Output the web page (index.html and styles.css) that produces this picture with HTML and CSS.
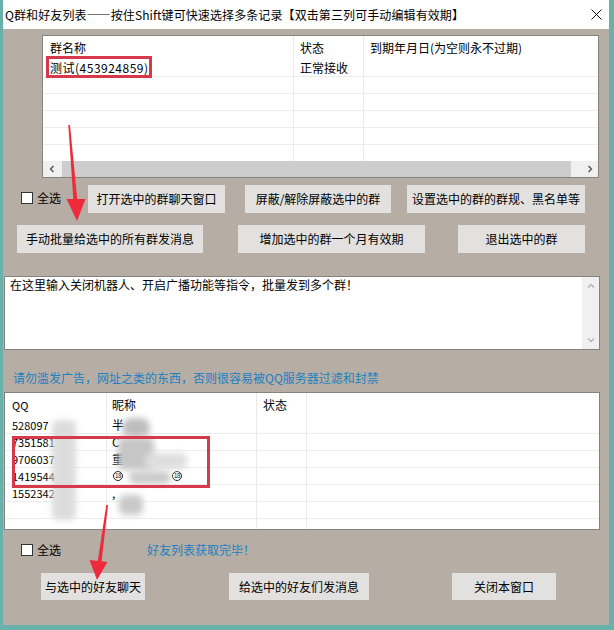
FILE: index.html
```html
<!DOCTYPE html>
<html lang="zh-CN">
<head>
<meta charset="utf-8">
<title>Q群和好友列表</title>
<link rel="stylesheet" href="styles.css">
</head>
<body>
<div class="window">
  <div class="titlebar">
    <span class="title">Q群和好友列表——按住Shift键可快速选择多条记录【双击第三列可手动编辑有效期】</span>
    <svg class="close" viewBox="0 0 11 11" width="11" height="11"><path d="M0.5 0.5 L10.5 10.5 M10.5 0.5 L0.5 10.5" stroke="#111" stroke-width="1" fill="none"/></svg>
  </div>
  <div class="client">
    <div class="listview grouplist">
      <div class="lv-head">
        <div class="cell g1">群名称</div>
        <div class="cell g2">状态</div>
        <div class="cell g3">到期年月日(为空则永不过期)</div>
      </div>
      <div class="lv-body">
        <div class="lv-row"><div class="cell g1 first">测试(453924859)</div><div class="cell g2">正常接收</div><div class="cell g3"></div></div>
        <div class="lv-row"><div class="cell g1"></div><div class="cell g2"></div><div class="cell g3"></div></div>
        <div class="lv-row"><div class="cell g1"></div><div class="cell g2"></div><div class="cell g3"></div></div>
        <div class="lv-row"><div class="cell g1"></div><div class="cell g2"></div><div class="cell g3"></div></div>
        <div class="lv-row"><div class="cell g1"></div><div class="cell g2"></div><div class="cell g3"></div></div>
        <div class="lv-row"><div class="cell g1"></div><div class="cell g2"></div><div class="cell g3"></div></div>
      </div>
      <div class="hscroll">
        <div class="sb-btn"><svg viewBox="0 0 8 8" width="8" height="8"><path d="M5.5 1 L2.5 4 L5.5 7" stroke="#555" stroke-width="1.4" fill="none"/></svg></div>
        <div class="sb-track"><div class="sb-thumb"></div></div>
        <div class="sb-btn"><svg viewBox="0 0 8 8" width="8" height="8"><path d="M2.5 1 L5.5 4 L2.5 7" stroke="#555" stroke-width="1.4" fill="none"/></svg></div>
      </div>
      <div class="mark mark-group"></div>
    </div>

    <div class="btn-row row1">
      <label class="check"><span class="box"></span>全选</label>
      <button class="btn b1">打开选中的群聊天窗口</button>
      <button class="btn b2">屏蔽/解除屏蔽选中的群</button>
      <button class="btn b3">设置选中的群的群规、黑名单等</button>
    </div>
    <div class="btn-row row2">
      <button class="btn b4">手动批量给选中的所有群发消息</button>
      <button class="btn b5">增加选中的群一个月有效期</button>
      <button class="btn b6">退出选中的群</button>
    </div>

    <div class="memo">
      <div class="memo-text">在这里输入关闭机器人、开启广播功能等指令，批量发到多个群！</div>
      <div class="vscroll">
        <svg viewBox="0 0 8 8" width="8" height="8"><path d="M1 5.5 L4 2.5 L7 5.5" stroke="#b0b0b0" stroke-width="1.3" fill="none"/></svg>
        <svg viewBox="0 0 8 8" width="8" height="8"><path d="M1 2.5 L4 5.5 L7 2.5" stroke="#b0b0b0" stroke-width="1.3" fill="none"/></svg>
      </div>
    </div>

    <div class="notice">请勿滥发广告，网址之类的东西，否则很容易被QQ服务器过滤和封禁</div>

    <div class="listview friendlist">
      <div class="lv-head">
        <div class="cell f1">QQ</div>
        <div class="cell f2">昵称</div>
        <div class="cell f3">状态</div>
        <div class="cell f4"></div>
      </div>
      <div class="lv-body">
        <div class="lv-row"><div class="cell f1">528097</div><div class="cell f2">半</div><div class="cell f3"></div><div class="cell f4"></div></div>
        <div class="lv-row"><div class="cell f1">7351581</div><div class="cell f2">C</div><div class="cell f3"></div><div class="cell f4"></div></div>
        <div class="lv-row"><div class="cell f1">9706037</div><div class="cell f2">重</div><div class="cell f3"></div><div class="cell f4"></div></div>
        <div class="lv-row"><div class="cell f1">1419544</div><div class="cell f2"><span class="sym">18</span><span class="sym sym2">18</span></div><div class="cell f3"></div><div class="cell f4"></div></div>
        <div class="lv-row"><div class="cell f1">1552342</div><div class="cell f2">,</div><div class="cell f3"></div><div class="cell f4"></div></div>
        <div class="lv-row"><div class="cell f1"></div><div class="cell f2"></div><div class="cell f3"></div><div class="cell f4"></div></div>
        <div class="lv-row"><div class="cell f1"></div><div class="cell f2"></div><div class="cell f3"></div><div class="cell f4"></div></div>
      </div>
      <div class="blur blur-a"></div>
      <div class="blur blur-b"></div>
      <div class="blur blur-c"></div>
      <div class="blur blur-c2"></div>
      <div class="blur blur-d"></div>
      <div class="blur blur-e"></div>
      <div class="mark mark-friend"></div>
    </div>

    <div class="status-row">
      <label class="check"><span class="box"></span>全选</label>
      <span class="status">好友列表获取完毕！</span>
    </div>
    <div class="btn-row row3">
      <button class="btn b7">与选中的好友聊天</button>
      <button class="btn b8">给选中的好友们发消息</button>
      <button class="btn b9">关闭本窗口</button>
    </div>
  </div>

  <svg class="arrows" viewBox="0 0 614 630" width="614" height="630">
    <polygon points="68.3,125 70,125 77.6,203 73.6,203" fill="#ee2b3b"/>
    <polygon points="66.5,199 85.5,199 77,221" fill="#ee2b3b"/>
    <polygon points="106.3,505 108,505 101.3,564 97.3,564" fill="#ee2b3b"/>
    <polygon points="89.5,560 107.5,562 97,580" fill="#ee2b3b"/>
  </svg>
</div>
</body>
</html>
```

FILE: styles.css
```css
* { box-sizing: border-box; }

html, body {
  margin: 0;
  padding: 0;
}

body {
  width: 614px;
  height: 630px;
  overflow: hidden;
  background: #69b2ab;
  font-family: "Noto Sans CJK SC", "Noto Sans", "Liberation Sans", sans-serif;
  font-size: 12px;
  color: #000;
}

.window {
  position: relative;
  width: 614px;
  height: 630px;
  display: flex;
  flex-direction: column;
  background: #b6aea4;
  border-left: 3px solid #69b2ab;
  border-right: 5px solid #69b2ab;
  border-bottom: 5px solid #69b2ab;
}

.titlebar {
  flex: none;
  height: 29px;
  background: #fff;
  display: flex;
  align-items: center;
  padding-left: 2px;
}

.title {
  flex: 1;
  line-height: 16px;
  white-space: nowrap;
  font-size: 12px;
  letter-spacing: 0.1px;
}

.close {
  flex: none;
  margin-right: 7px;
}

.client {
  flex: 1;
  display: flex;
  flex-direction: column;
}

/* list views */
.listview {
  position: relative;
  flex: none;
  display: flex;
  flex-direction: column;
  overflow: hidden;
  background: #fff;
  border: 1px solid #86827d;
}

.grouplist {
  margin: 6px 0 0 39px;
  width: 557px;
  height: 143px;
}

.friendlist {
  margin: 6px 9px 0 1px;
  height: 138px;
}

.lv-head {
  flex: none;
  display: flex;
  height: 24px;
}

.lv-body {
  flex: 1;
  overflow: hidden;
  display: flex;
  flex-direction: column;
}

.lv-row {
  flex: none;
  display: flex;
  height: 17px;
  border-bottom: 1px solid #ededed;
}

.cell {
  flex: none;
  display: flex;
  align-items: center;
  height: 100%;
  padding-left: 6px;
  white-space: nowrap;
  line-height: 16px;
  border-right: 1px solid #eaeaea;
}

.cell:last-child {
  flex: 1;
  border-right: none;
}

.g1 { width: 251px; padding-left: 7px; }
.g1.first { letter-spacing: 0.5px; }
.g2 { width: 70px; }
.f1 { width: 102px; padding-left: 7px; font-size: 11px; }
.f2 { width: 150px; padding-left: 5px; }
.f3 { width: 50px; }

.sym {
  display: inline-flex;
  align-items: center;
  justify-content: center;
  width: 10px;
  height: 10px;
  border: 1px solid #222;
  border-radius: 50%;
  font-size: 6px;
  line-height: 6px;
  letter-spacing: -0.3px;
  color: #000;
  margin-left: 1px;
}
.sym2 { margin-left: 49px; }

/* horizontal scrollbar */
.hscroll {
  flex: none;
  height: 16px;
  display: flex;
  background: #f0f0f0;
}

.sb-btn {
  width: 17px;
  display: flex;
  align-items: center;
  justify-content: center;
}

.sb-track {
  flex: 1;
  padding: 0 10px 0 2px;
}

.sb-thumb {
  height: 100%;
  background: #cdcdcd;
}

/* annotations */
.mark {
  position: absolute;
  border: 3px solid #d6394a;
}

.mark-group {
  left: 3px;
  top: 20px;
  width: 106px;
  height: 22px;
}

.mark-friend {
  left: 7px;
  top: 43px;
  width: 198px;
  height: 52px;
}

.blur {
  position: absolute;
  filter: blur(3px);
  border-radius: 6px;
}

.blur-a { left: 47px; top: 27px; width: 24px; height: 100px; background: #dcdcdc; }
.blur-b { left: 117px; top: 25px; width: 28px; height: 19px; background: #bdbdbd; border-radius: 10px; }
.blur-c { left: 113px; top: 44px; width: 36px; height: 33px; background: #c6c6c6; }
.blur-c2 { left: 140px; top: 60px; width: 42px; height: 16px; background: #dedede; }
.blur-d { left: 124px; top: 78px; width: 42px; height: 13px; background: #cbcbcb; }
.blur-e { left: 114px; top: 102px; width: 24px; height: 20px; background: #c9c9c9; }

.arrows {
  position: absolute;
  left: -3px;
  top: 0;
  pointer-events: none;
}

/* checkbox */
.check {
  display: flex;
  align-items: center;
  gap: 4px;
  line-height: 16px;
  flex: none;
}

.box {
  width: 12px;
  height: 12px;
  background: #fff;
  border: 1px solid #333;
}

/* buttons */
.btn-row {
  flex: none;
  display: flex;
  align-items: center;
}

.btn {
  flex: none;
  height: 28px;
  padding: 0;
  border: none;
  background: #e2e1df;
  color: #000;
  font-family: inherit;
  font-size: 12px;
  line-height: 16px;
  display: flex;
  align-items: center;
  justify-content: center;
}

.row1 { margin-top: 7px; padding-left: 18px; }
.row1 .check { margin-bottom: 3px; }
.b1 { width: 137px; margin-left: 27px; }
.b2 { width: 146px; margin-left: 20px; }
.b3 { width: 178px; margin-left: 16px; }

.row2 { margin-top: 12px; padding-left: 14px; }
.b4 { width: 186px; }
.b5 { width: 187px; margin-left: 35px; }
.b6 { width: 127px; margin-left: 33px; }

.row3 { margin-top: 15px; padding-left: 38px; }
.row3 .btn { height: 27px; }
.b7 { width: 104px; }
.b8 { width: 140px; margin-left: 84px; }
.b9 { width: 104px; margin-left: 83px; }

/* memo */
.memo {
  flex: none;
  margin: 23px 9px 0 1px;
  height: 74px;
  display: flex;
  background: #fff;
  border: 1px solid #86827d;
}

.memo-text {
  flex: 1;
  padding: 0 5px;
  line-height: 16px;
}

.vscroll {
  flex: none;
  width: 17px;
  background: #f0f0f0;
  display: flex;
  flex-direction: column;
  justify-content: space-between;
  align-items: center;
  padding: 5px 0;
}

.notice {
  flex: none;
  margin-top: 20px;
  padding-left: 10px;
  line-height: 16px;
  color: #1c80c2;
}

.status-row {
  flex: none;
  margin-top: 12px;
  padding-left: 18px;
  display: flex;
  align-items: center;
  height: 16px;
}

.status {
  margin-left: 86px;
  line-height: 16px;
  color: #1c80c2;
}
```
